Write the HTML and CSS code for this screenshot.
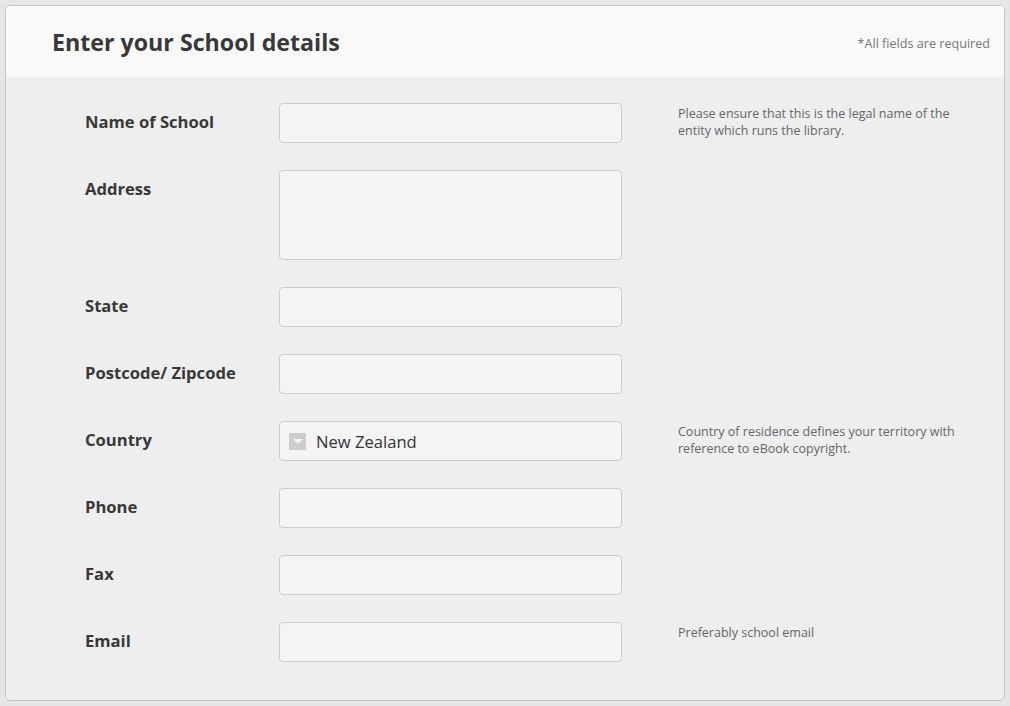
FILE: index.html
```html
<!DOCTYPE html>
<html lang="en">

<head>
    <meta charset="UTF-8">
    <meta name="viewport" content="width=device-width, initial-scale=1.0">
    <title>School details</title>
    <link rel="stylesheet" href="styles.css">
</head>

<body>
<div class="panel">
    <div class="panel_head">
        <h1>Enter your School details</h1>
        <span class="required">*All fields are required</span>
    </div>
    <form class="panel_body" action="#" method="POST">
        <div class="row">
            <label class="row_label" for="schoolName">Name of School</label>
            <input class="field" type="text" id="schoolName" name="schoolName">
            <p class="hint">Please ensure that this is the legal name of the entity which runs the library.</p>
        </div>
        <div class="row">
            <label class="row_label" for="address">Address</label>
            <textarea class="field area" id="address" name="address"></textarea>
            <p class="hint"></p>
        </div>
        <div class="row">
            <label class="row_label" for="state">State</label>
            <input class="field" type="text" id="state" name="state">
            <p class="hint"></p>
        </div>
        <div class="row">
            <label class="row_label" for="postcode">Postcode/ Zipcode</label>
            <input class="field" type="text" id="postcode" name="postcode">
            <p class="hint"></p>
        </div>
        <div class="row">
            <label class="row_label" for="country">Country</label>
            <div class="field select" id="country">
                <span class="arrow"></span>
                <span class="select_value">New Zealand</span>
            </div>
            <p class="hint">Country of residence defines your territory with reference to eBook copyright.</p>
        </div>
        <div class="row">
            <label class="row_label" for="phone">Phone</label>
            <input class="field" type="tel" id="phone" name="phone">
            <p class="hint"></p>
        </div>
        <div class="row">
            <label class="row_label" for="fax">Fax</label>
            <input class="field" type="tel" id="fax" name="fax">
            <p class="hint"></p>
        </div>
        <div class="row">
            <label class="row_label" for="email">Email</label>
            <input class="field" type="email" id="email" name="email">
            <p class="hint">Preferably school email</p>
        </div>
    </form>
</div>
</body>

</html>
```

FILE: styles.css
```css
* {
    margin: 0;
    padding: 0;
    box-sizing: border-box;
}

body {
    background: #e6e6e6;
    font-family: "Open Sans", "Liberation Sans", sans-serif;
    color: #333;
    padding: 5px 5px;
}

.panel {
    width: 1000px;
    height: 696px;
    border: 1px solid #c4c4c4;
    border-radius: 5px;
    background: #eeeeee;
    overflow: hidden;
}

.panel_head {
    height: 71px;
    background: #f9f9f9;
    display: flex;
    align-items: center;
    justify-content: space-between;
    padding: 0 14px 0 46px;
}

.panel_head h1 {
    font-size: 23.2px;
    font-weight: 700;
    color: #383838;
}

.required {
    font-size: 12.6px;
    color: #777;
    margin-top: 4px;
}

.panel_body {
    display: flex;
    flex-direction: column;
    gap: 27px;
    padding: 26px 0 0 79px;
}

.row {
    display: flex;
    align-items: flex-start;
}

.row_label {
    width: 194px;
    padding-top: 7px;
    font-size: 16.6px;
    font-weight: 700;
    color: #383838;
}

.field {
    width: 343px;
    height: 40px;
    border: 1px solid #cccccc;
    border-radius: 4px;
    background: #f4f4f4;
    font-family: inherit;
}

.area {
    height: 90px;
    resize: none;
}

.select {
    display: flex;
    align-items: center;
    padding-left: 9px;
}

.arrow {
    width: 17px;
    height: 17px;
    background: #cccccc;
    position: relative;
}

.arrow::after {
    content: "";
    position: absolute;
    left: 4px;
    top: 6px;
    border-left: 5px solid transparent;
    border-right: 5px solid transparent;
    border-top: 5px solid #f4f4f4;
}

.select_value {
    margin-left: 10px;
    font-size: 16.6px;
    color: #333;
}

.hint {
    width: 300px;
    margin-left: 56px;
    padding-top: 2px;
    font-size: 12.5px;
    line-height: 17px;
    color: #666;
}
```
